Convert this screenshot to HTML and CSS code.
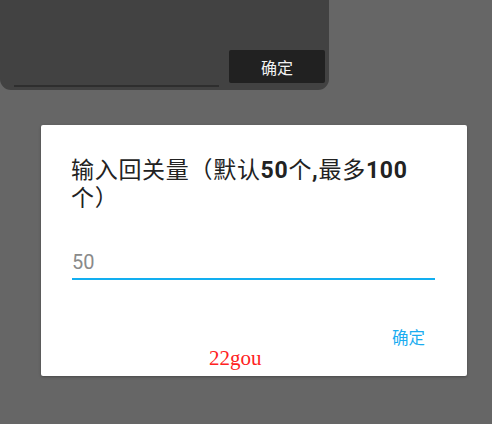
FILE: index.html
```html
<!DOCTYPE html>
<html lang="zh-CN">
  <head>
    <meta charset="UTF-8" />
    <meta name="viewport" content="width=device-width, initial-scale=1.0" />
    <title>输入回关量</title>
    <link rel="stylesheet" href="styles.css">
  </head>
  <body>
    <div class="sheet">
      <div class="sheet-row">
        <div class="sheet-line"></div>
        <button class="sheet-btn">确定</button>
      </div>
    </div>

    <div class="dialog">
      <h2 class="dialog-title">输入回关量（默认<span class="num">50</span>个<span class="num">,</span>最多<span class="num">100</span>个）</h2>
      <div class="field">
        <input type="text" class="field-input" placeholder="50" />
      </div>
      <div class="actions">
        <button class="action-btn">确定</button>
      </div>
      <span class="mark">22gou</span>
    </div>
  </body>
</html>
```

FILE: styles.css
```css
body {
  margin: 0;
  background: #666666;
  font-family: Roboto, "Noto Sans CJK SC", sans-serif;
  height: 424px;
  overflow: hidden;
}
.sheet {
  width: 329px;
  height: 90px;
  background: #424242;
  border-radius: 0 0 11px 11px;
  display: flex;
  flex-direction: column;
  justify-content: flex-end;
}
.sheet-row {
  display: flex;
  align-items: flex-end;
  padding: 0 4px 3px 14px;
}
.sheet-line {
  width: 205px;
  height: 2px;
  background: #2e2e2e;
}
.sheet-btn {
  margin-left: 10px;
  margin-bottom: 4px;
  width: 96px;
  height: 33px;
  background: #212121;
  border: none;
  border-radius: 2px;
  color: #f2f2f2;
  font-family: Roboto, "Noto Sans CJK SC", sans-serif;
  font-size: 16px;
  padding: 0;
}
.dialog {
  position: relative;
  margin: 35px 0 0 41px;
  width: 426px;
  height: 251px;
  background: #ffffff;
  border-radius: 2px;
  box-shadow: 0 1px 3px rgba(0, 0, 0, 0.3);
  box-sizing: border-box;
  padding: 32px 32px 0 30px;
}
.dialog-title {
  margin: 0;
  font-size: 23px;
  font-weight: 400;
  letter-spacing: 0.7px;
  line-height: 28px;
  color: #222222;
  width: 342px;
}
.num {
  font-weight: 700;
}
.field {
  margin-top: 36px;
  padding-left: 1px;
}
.field-input {
  width: 363px;
  box-sizing: border-box;
  border: none;
  border-bottom: 2px solid #12aef0;
  outline: none;
  padding: 0 0 3px 0;
  font-family: Roboto, sans-serif;
  font-size: 20px;
  line-height: 26px;
  color: #333;
}
.field-input::placeholder {
  color: #8a8a8a;
}
.actions {
  display: flex;
  justify-content: flex-end;
  margin-top: 48px;
  padding-right: 10px;
}
.action-btn {
  background: none;
  border: none;
  padding: 0;
  color: #1aacf0;
  font-family: Roboto, "Noto Sans CJK SC", sans-serif;
  font-size: 16.5px;
  line-height: 22px;
}
.mark {
  position: absolute;
  left: 168px;
  top: 221px;
  font-family: "Liberation Serif", serif;
  font-size: 21px;
  color: #ff2222;
}
```
